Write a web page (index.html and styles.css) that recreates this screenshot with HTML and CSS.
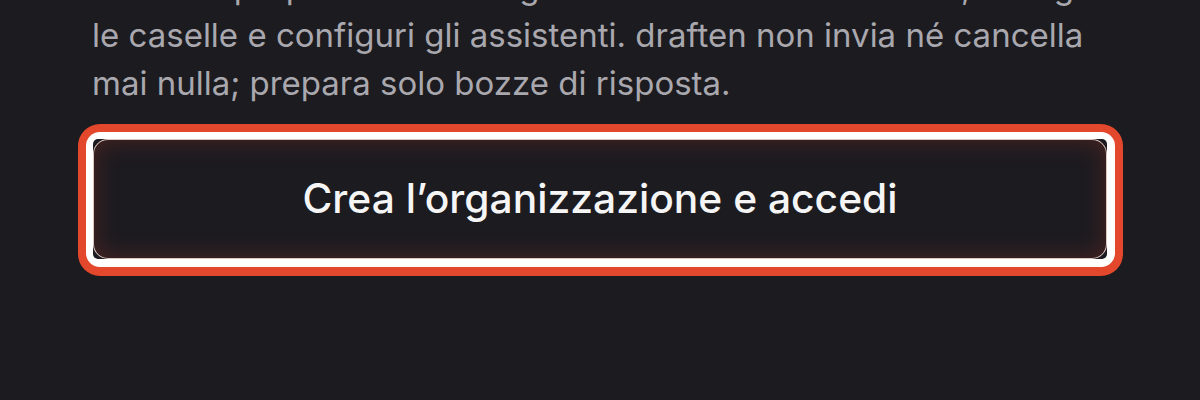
FILE: index.html
```html
<!DOCTYPE html>
<html lang="it">
<head>
<meta charset="utf-8">
<title>Crea l’organizzazione</title>
<link rel="stylesheet" href="styles.css">
</head>
<body>
<main class="panel">
  <p class="intro">Diventi il proprietario dell’organizzazione: inviti i membri, colleghi le caselle e configuri gli assistenti. draften non invia né cancella mai nulla; prepara solo bozze di risposta.</p>
  <div class="focus-ring">
    <div class="focus-inner">
      <div class="focus-slot">
        <button class="submit" type="button">Crea l’organizzazione e accedi</button>
      </div>
    </div>
  </div>
</main>
</body>
</html>
```

FILE: styles.css
```css
html, body {
  margin: 0;
  padding: 0;
  background: #1c1b20;
  height: 100%;
  overflow: hidden;
}

.panel {
  width: 1014px;
  margin: 0 auto;
  font-family: Inter, "Noto Sans", sans-serif;
}

.intro {
  margin: -37px -20px 0 -1px;
  font-size: 33px;
  line-height: 48px;
  color: #a9a8ae;
  font-weight: 400;
}

.focus-ring {
  margin: 17px -16px 0 -15px;
  padding: 8px 8px 9px;
  background: #e4482c;
  border-radius: 22px;
}

.focus-inner {
  padding: 7px 8px 8px 7px;
  background: #ffffff;
  border-radius: 14px;
}

.focus-slot {
  background: #1c1b20;
  border-radius: 5px;
}

.submit {
  display: block;
  width: 100%;
  height: 120px;
  margin: 0;
  padding: 0 0 2px;
  border: 1.5px solid rgba(255, 228, 218, 0.85);
  border-radius: 15px;
  background: #1c1b20;
  box-shadow: inset 0 0 22px 2px rgba(120, 45, 35, 0.45);
  color: #f5f5f6;
  font-family: Inter, "Noto Sans", sans-serif;
  font-size: 40.75px;
  font-weight: 500;
  cursor: pointer;
}
```
